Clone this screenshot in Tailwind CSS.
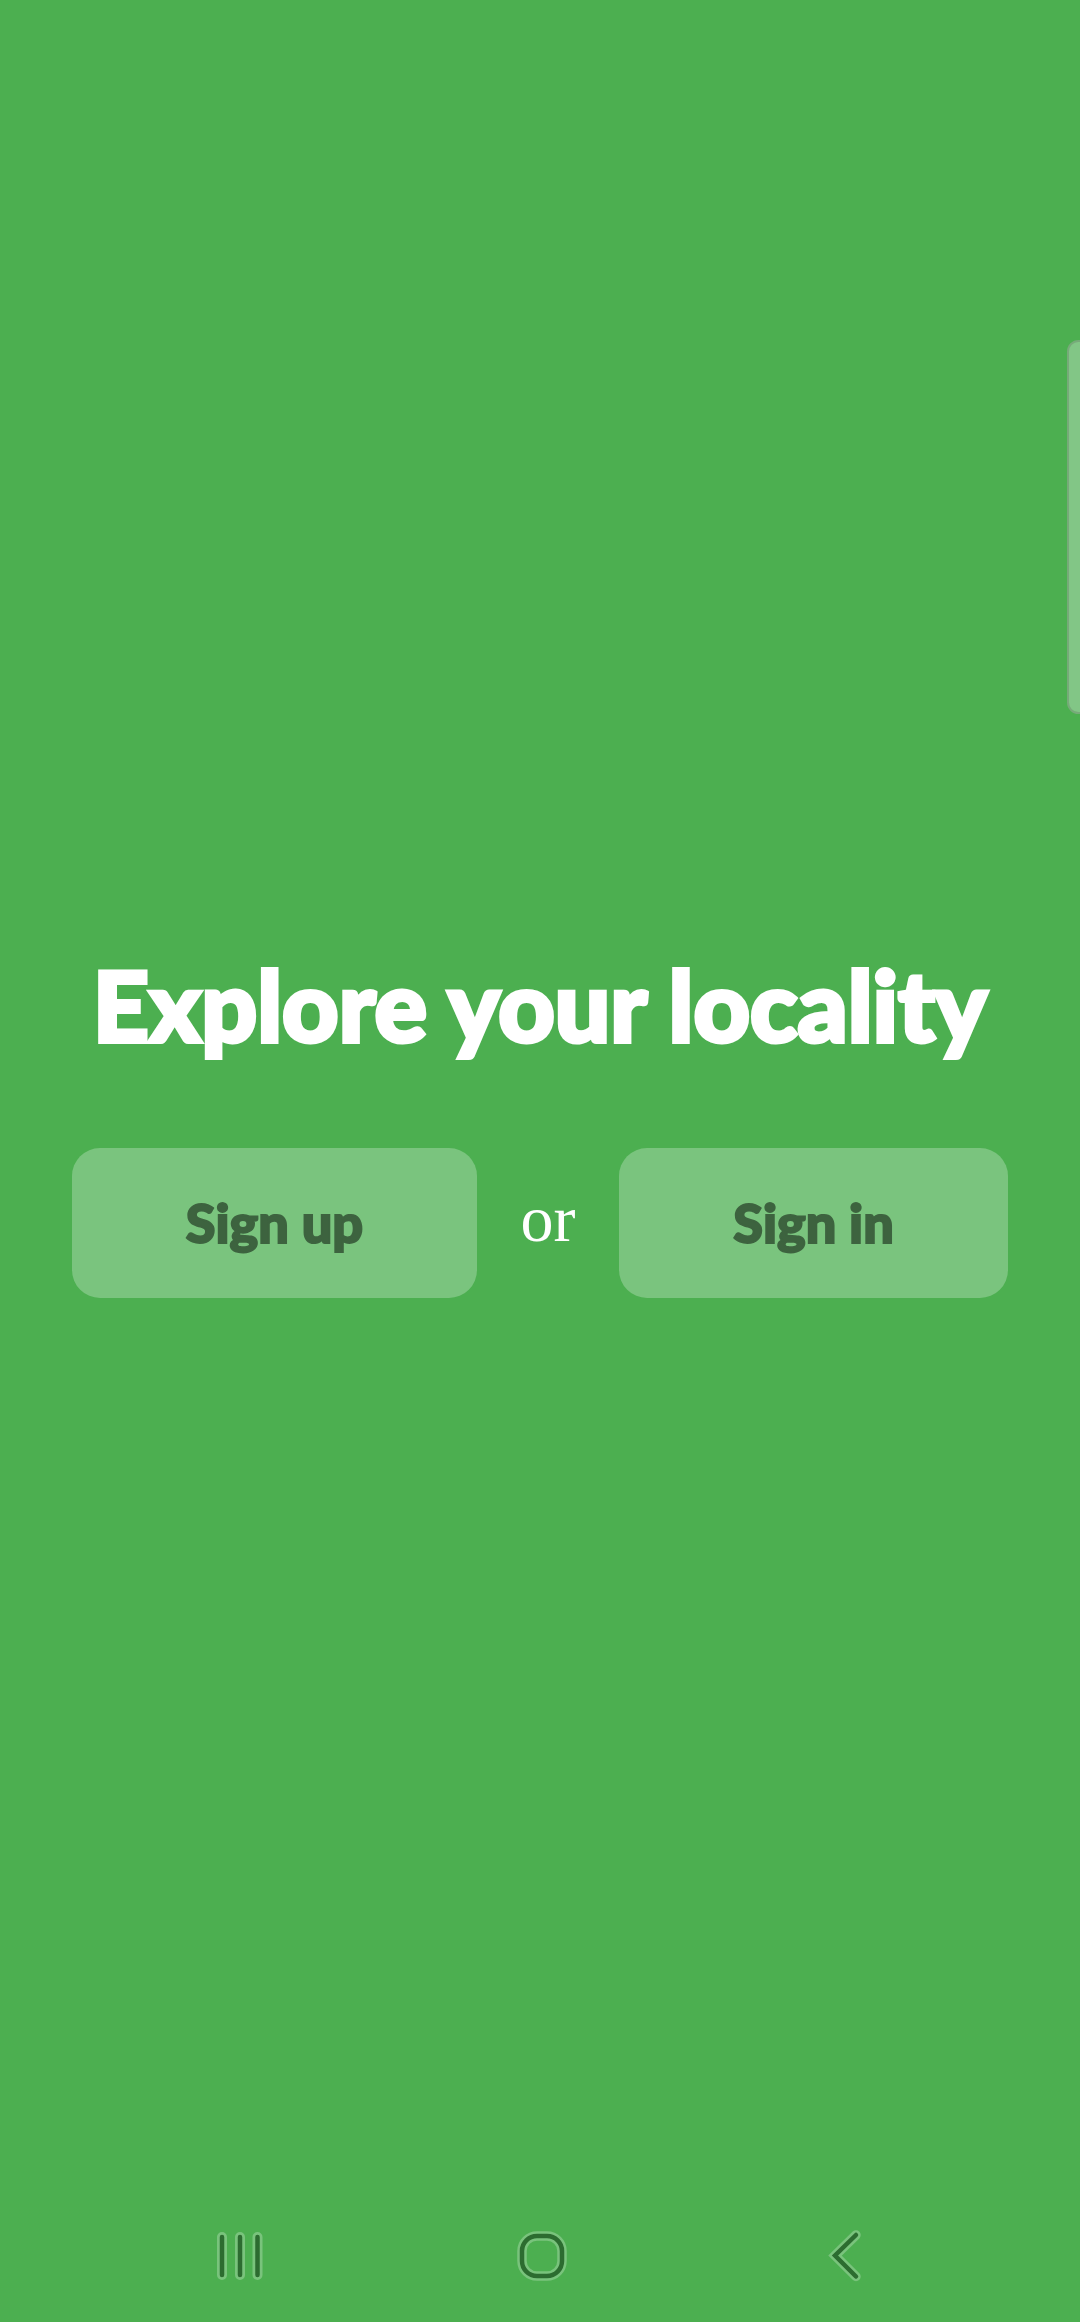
<!DOCTYPE html>
<html lang="en">
<head>
<meta charset="utf-8">
<meta name="viewport" content="width=device-width, initial-scale=1">
<title>Explore your locality</title>
<script src="https://cdn.jsdelivr.net/npm/@tailwindcss/browser@4"></script>
</head>
<body class="relative flex min-h-screen flex-col overflow-x-hidden bg-[#4caf50] font-['Lato',sans-serif]">
  <main class="flex flex-1 flex-col justify-center gap-[84px] px-[72px] pt-[52px]">
    <h1 class="text-center text-[98px] leading-[120px] font-black whitespace-nowrap text-white [-webkit-text-stroke:4px_white]">Explore your locality</h1>
    <div class="flex items-center justify-between">
      <button type="button" class="h-[150px] w-[405px] rounded-[28px] bg-[#7ac47e] text-[54px] leading-[64px] font-black text-[#3d633f] [-webkit-text-stroke:2px_#3d633f]">Sign up</button>
      <span class="pb-2 font-['Liberation_Serif',serif] text-[66px] leading-[72px] text-white">or</span>
      <button type="button" class="h-[150px] w-[389px] rounded-[28px] bg-[#7ac47e] text-[54px] leading-[64px] font-black text-[#3d633f] [-webkit-text-stroke:2px_#3d633f]">Sign in</button>
    </div>
  </main>
  <nav aria-label="System navigation" class="grid h-[132px] grid-cols-3 items-center justify-items-center px-[88px]">
    <button type="button" aria-label="Recent apps">
      <svg class="block h-[70px] w-[80px]" viewBox="-1 1 80 70" fill="none" stroke-linecap="round">
        <path d="M22 17v38M40 17v38M57.500 17v38" stroke="#79c37c" stroke-width="10"/>
        <path d="M22 17v38M40 17v38M57.500 17v38" stroke="#2c6c30" stroke-width="4.500"/>
      </svg>
    </button>
    <button type="button" aria-label="Home">
      <svg class="block h-[70px] w-[80px]" viewBox="0 1 80 70" fill="none">
        <rect x="22" y="16" width="40" height="40" rx="15" stroke="#79c37c" stroke-width="9.500"/>
        <rect x="22" y="16" width="40" height="40" rx="15" stroke="#2c6c30" stroke-width="4.500"/>
      </svg>
    </button>
    <button type="button" aria-label="Back">
      <svg class="block h-[70px] w-[80px]" viewBox="-9 1 80 70" fill="none" stroke-linecap="round">
        <path d="M46 15L25 35.500L46 56.500" stroke="#79c37c" stroke-width="9.500"/>
        <path d="M46 15L25 35.500L46 56.500" stroke="#2c6c30" stroke-width="4.500"/>
      </svg>
    </button>
  </nav>
  <!-- Edge panel handle -->
  <div class="absolute top-[340px] right-[-10px] h-[374px] w-[23px] rounded-[12px] border-2 border-[#77aa79] bg-[#82c686]"></div>
</body>
</html>
